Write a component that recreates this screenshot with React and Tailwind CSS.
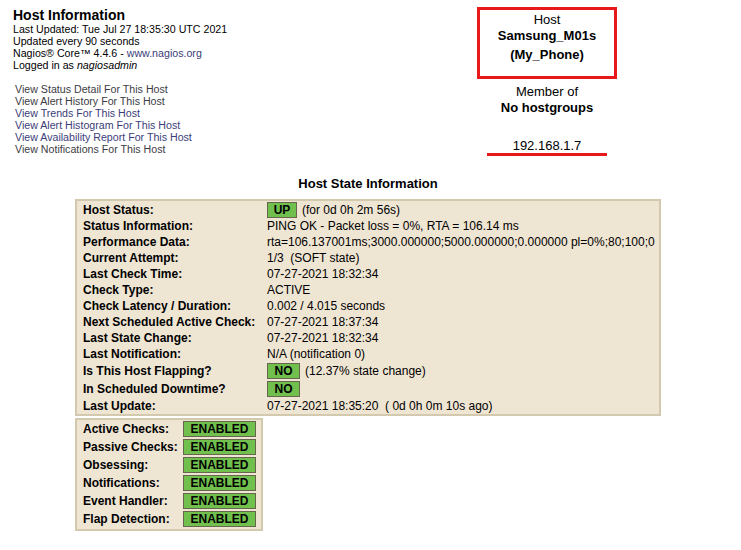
import React from 'react';

const font = { fontFamily: '"Liberation Sans", Arial, sans-serif' };

function Badge({ children, w }) {
  return (
    <span className={`inline-flex items-center justify-center h-[16px] ${w} bg-[#71c04e] border border-[#66664f] font-bold text-[12px] leading-none text-black`}>
      {children}
    </span>
  );
}

const hostRows = [
  { label: 'Host Status:', h: 'h-[17px]', value: <><Badge w="w-[30px]">UP</Badge><span className="ml-[5px]">(for 0d 0h 2m 56s)</span></> },
  { label: 'Status Information:', value: 'PING OK - Packet loss = 0%, RTA = 106.14 ms' },
  { label: 'Performance Data:', value: 'rta=106.137001ms;3000.000000;5000.000000;0.000000 pl=0%;80;100;0' },
  { label: 'Current Attempt:', value: '1/3\u00a0\u00a0(SOFT state)' },
  { label: 'Last Check Time:', value: '07-27-2021 18:32:34' },
  { label: 'Check Type:', value: 'ACTIVE' },
  { label: 'Check Latency / Duration:', value: '0.002\u00a0/\u00a04.015 seconds' },
  { label: 'Next Scheduled Active Check:', value: '07-27-2021 18:37:34' },
  { label: 'Last State Change:', value: '07-27-2021 18:32:34' },
  { label: 'Last Notification:', value: 'N/A (notification 0)' },
  { label: 'Is This Host Flapping?', h: 'h-[18px]', value: <><Badge w="w-[33px]">NO</Badge><span className="ml-[5px]">(12.37% state change)</span></> },
  { label: 'In Scheduled Downtime?', h: 'h-[18px]', value: <Badge w="w-[33px]">NO</Badge> },
  { label: 'Last Update:', value: '07-27-2021 18:35:20\u00a0\u00a0( 0d 0h 0m 10s ago)' },
];

const checks = ['Active Checks:', 'Passive Checks:', 'Obsessing:', 'Notifications:', 'Event Handler:', 'Flap Detection:'];

export default function App() {
  return (
    <div className="w-[741px] h-[550px] bg-white text-black overflow-hidden" style={font}>
      <div className="flex">
        <div className="w-[467px] pl-[13px] pt-[7px]">
          <div className="text-[14px] font-bold leading-[16px]">Host Information</div>
          <div className="text-[10.65px] leading-[12px]">
            <div>Last Updated: Tue Jul 27 18:35:30 UTC 2021</div>
            <div>Updated every 90 seconds</div>
            <div>Nagios® Core™ 4.4.6 - <span className="text-[#3b3d7a]">www.nagios.org</span></div>
            <div>Logged in as <i>nagiosadmin</i></div>
          </div>
          <div className="mt-[12px] pl-[2px] text-[10.65px] leading-[12px]">
            <div className="text-[#3c3c44]">View Status Detail For This Host</div>
            <div className="text-[#3c3c44]">View Alert History For This Host</div>
            <div className="text-[#3b3d7a]">View Trends For This Host</div>
            <div className="text-[#3b3d7a]">View Alert Histogram For This Host</div>
            <div className="text-[#3b3d7a]">View Availability Report For This Host</div>
            <div className="text-[#3c3c44]">View Notifications For This Host</div>
          </div>
        </div>
        <div className="w-[160px] pt-[7px] flex flex-col items-center">
          <div className="w-[140px] h-[72px] border-[3px] border-[#e8191b] flex flex-col items-center pt-[2px]">
            <div className="text-[13px] leading-[16px]">Host</div>
            <div className="text-[13px] font-bold leading-[16px]">Samsung_M01s</div>
            <div className="text-[13px] font-bold leading-[16px] mt-[3px]">(My_Phone)</div>
          </div>
          <div className="mt-[5px] text-[13px] leading-[16px]">Member of</div>
          <div className="text-[13px] font-bold leading-[16px]">No hostgroups</div>
          <div className="mt-[23px] text-[13px] leading-[14px] border-b-[3px] border-[#e8191b] w-[120px] text-center">192.168.1.7</div>
        </div>
      </div>

      <div className="mt-[20px] w-[586px] ml-[75px] text-center text-[13px] font-bold leading-[16px]">Host State Information</div>

      <div className="ml-[75px] mt-[7px] w-[586px] bg-[#efe5d3] border-2 border-[#d3c9ae] text-[12px]">
        {hostRows.map((r) => (
          <div key={r.label} className={`flex items-center ${r.h || 'h-[16px]'}`}>
            <div className="w-[190px] pl-[6px] font-bold">{r.label}</div>
            <div className="flex items-center whitespace-nowrap">{r.value}</div>
          </div>
        ))}
      </div>

      <div className="ml-[75px] mt-[2px] w-[188px] bg-[#efe5d3] border-2 border-[#d3c9ae] pb-[1px] text-[12px]">
        {checks.map((c) => (
          <div key={c} className="flex items-center h-[18px]">
            <div className="w-[106px] pl-[6px] font-bold whitespace-nowrap">{c}</div>
            <Badge w="w-[73px]">ENABLED</Badge>
          </div>
        ))}
      </div>
    </div>
  );
}
